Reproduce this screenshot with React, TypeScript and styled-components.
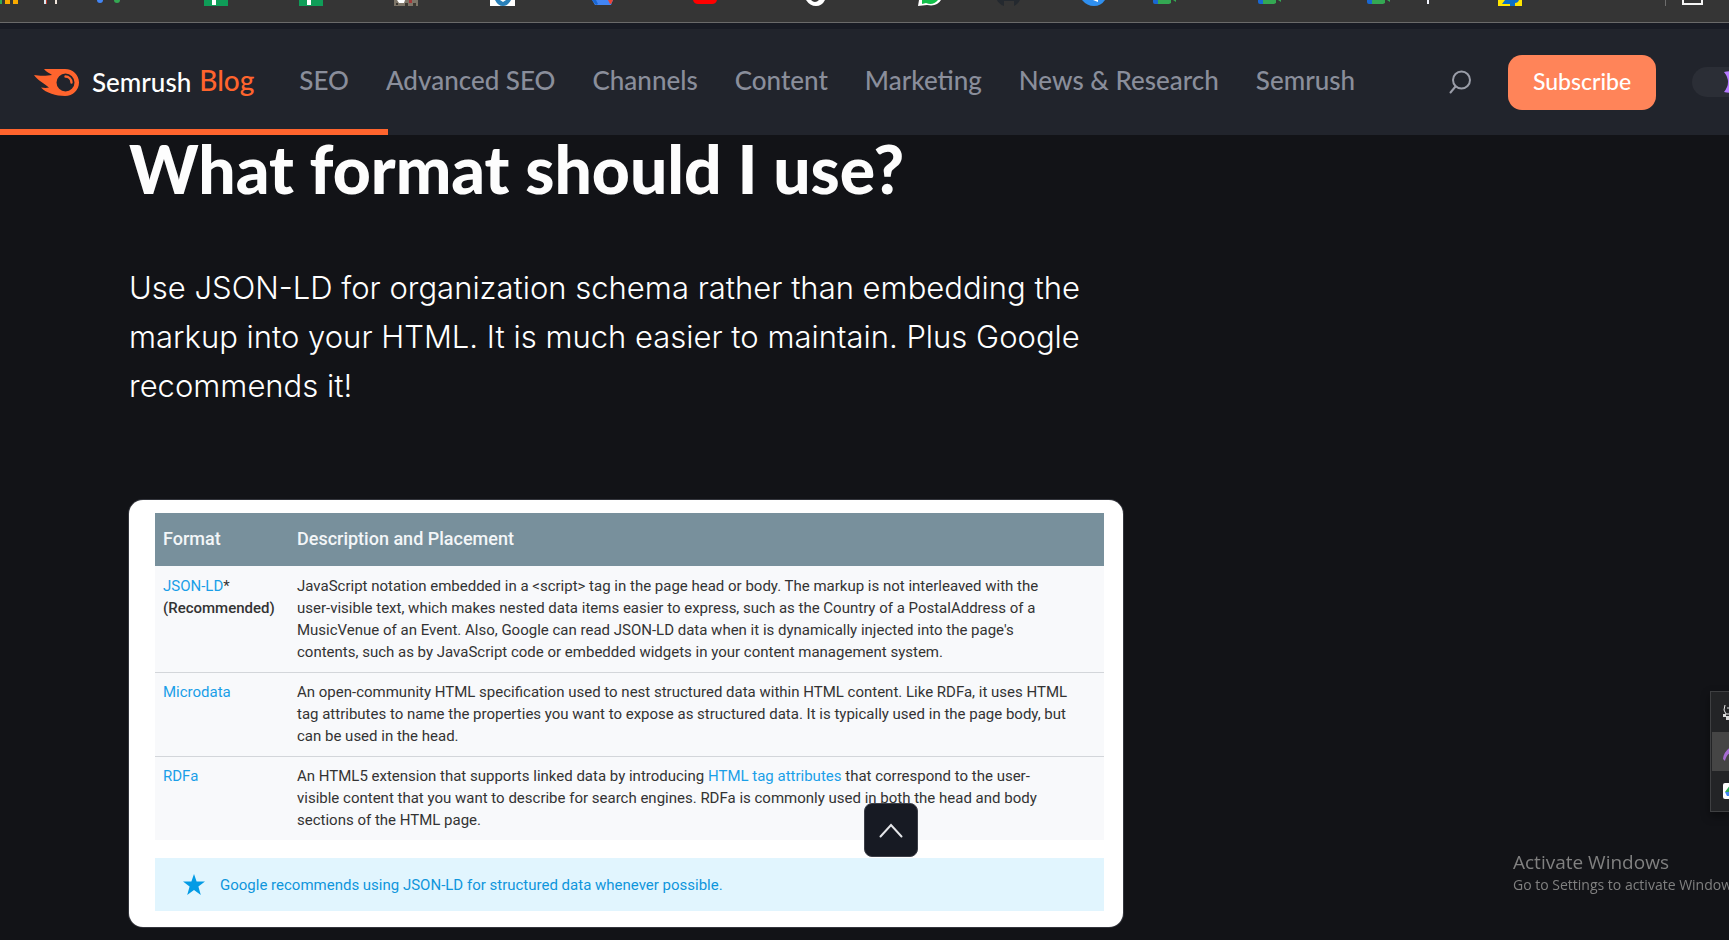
import React from 'react';
import styled, { createGlobalStyle } from 'styled-components';

const GlobalStyle = createGlobalStyle`
  *, *::before, *::after { box-sizing: border-box; }
  html, body { margin: 0; background: #121317; }
  body { height: 100vh; overflow: hidden; font-family: Inter, "Liberation Sans", sans-serif; color: #fff; }
  button { font: inherit; border: 0; padding: 0; cursor: pointer; }
`;

const Page = styled.div`
  min-height: 100vh;
  background: #121317;
`;

/* ---------- browser bookmarks strip ---------- */

const Bookmarks = styled.div`
  height: 23px;
  background: #353535;
  border-bottom: 1px solid #6a6a6a;
  svg { display: block; }
`;

function BookmarkIcons() {
  return (
    <svg width="1729" height="22" viewBox="0 0 1729 22" aria-hidden="true">
      <path d="M0 0h2v4H0z" fill="#34a853" />
      <path d="M5 0h5v4H5zM13 0h5v4h-5z" fill="#f9ab00" />
      <path d="M44 0h3v4h-3z" fill="#d9e8f0" />
      <path d="M46 0h1v4h-1z" fill="#c0392b" />
      <path d="M55 0h2v4h-2z" fill="#f1e6dc" />
      <path d="M97 0h6q0 3-3 3t-3-3" fill="#4285f4" />
      <path d="M114 0h6q0 3-3 3t-3-3" fill="#34a853" />
      <path d="M204 0h24v6h-24z" fill="#0f9d58" />
      <path d="M212 0h4v5h-4z" fill="#fff" />
      <path d="M299 0h24v6h-24z" fill="#0f9d58" />
      <path d="M307 0h4v5h-4z" fill="#fff" />
      <path d="M394 0h24v6h-24z" fill="#7d7568" />
      <path d="M397 0h8l-1 3h-5z" fill="#fff" />
      <path d="M409 0h3v3h-3z" fill="#a23a3a" />
      <path d="M405 3h3v3h-3zM413 3h3v3h-3zM396 3h2v2h-2z" fill="#3c3832" />
      <path d="M490 0h25v6h-25z" fill="#fff" />
      <path d="M495 0q3 6 8 6t8-6h-5l-3 2-3-2z" fill="#2980b9" />
      <path d="M592 0h21l-2 5h-16z" fill="#4285f4" />
      <path d="M592 0h4l2 4-2 1z" fill="#1967d2" />
      <path d="M608 0h5l-2 4h-1z" fill="#ea4335" />
      <path d="M693 0h24q-1 4-5 4h-14q-4 0-5-4" fill="#f00" />
      <path d="M806 0h5q4 4 8 0l2 0h4q-3 6-9 6t-10-6" fill="#fff" />
      <path d="M919 0h22q-4 7-14 5l-9 1z" fill="#fff" />
      <path d="M922 0h16q-5 6-12 3l-4 1z" fill="#12c04a" />
      <path d="M997 0h23q-2 4-6 6v-5h-10v5q-5-2-7-6" fill="#24292f" />
      <path d="M1082 0h23q-4 6-11 6t-12-6" fill="#2f8fef" />
      <path d="M1093 0h5v2z" fill="#fff" />
      {[1153, 1258, 1367].map((x) => (
        <g key={x}>
          <path d={`M${x} 0h5v4h-3q-2 0-2-2z`} fill="#1967d2" />
          <path d={`M${x + 5} 0h13v3l-2 1h-11zM${x + 20} 0h3v2z`} fill="#34a853" />
        </g>
      ))}
      <path d="M1427 0h2v4h-2z" fill="#f4f6ff" />
      <path d="M1498 0h24v6h-24z" fill="#ffe600" />
      <path d="M1505 0h14q-1 3-4 3v3h-5v-2h-8z" fill="#0b6fc7" />
      <path d="M1665 0h1v6h-1z" fill="#6d6d6d" />
      <path d="M1683 0v4h19V0" fill="none" stroke="#f5f5f5" strokeWidth="2" />
    </svg>
  );
}

/* ---------- site header ---------- */

const Header = styled.header`
  position: relative;
  display: flex;
  align-items: center;
  height: 112px;
  padding: 0 0 0 34px;
  overflow: hidden;
  background: #21242c;
  border-top: 6px solid #181b24;
  font-family: Lato, "Open Sans", sans-serif;
  white-space: nowrap;
`;

const Brand = styled.a`
  display: flex;
  align-items: center;
  flex: none;
  color: #fff;
  font-size: 26px;
  font-weight: 500;
  text-decoration: none;
  svg { margin-right: 13px; }
`;

const BrandSection = styled.span`
  margin-left: 8px;
  padding-bottom: 4px;
  color: #ff642d;
  font-size: 28px;
`;

const Nav = styled.nav`
  display: flex;
  flex: none;
  gap: 37px;
  margin-left: 45px;
  padding-bottom: 4px;
`;

const NavLink = styled.a`
  color: #8a8e9b;
  font-size: 26px;
  font-weight: 500;
  text-decoration: none;
`;

const Actions = styled.div`
  display: flex;
  align-items: center;
  flex: none;
  margin-left: auto;
`;

const IconButton = styled.button`
  display: flex;
  margin-right: 37px;
  background: none;
`;

const Subscribe = styled.button`
  width: 148px;
  height: 55px;
  margin-right: 36px;
  padding-bottom: 2px;
  border-radius: 14px;
  background: #ff8459;
  color: #fff;
  font-size: 23px;
  font-weight: 500;
`;

const ThemeToggle = styled.button`
  display: flex;
  align-items: center;
  width: 37px;
  height: 30px;
  padding-left: 32px;
  overflow: hidden;
  border-radius: 15px 0 0 15px;
  background: #2b2e36;
  svg { flex: none; }
`;

const Progress = styled.div`
  position: absolute;
  left: 0;
  bottom: 0;
  width: 22.44%;
  height: 6px;
  background: #ff642d;
`;

/* ---------- article ---------- */

const Article = styled.main`
  max-width: 1123px;
  padding-left: 129px;
`;

const Heading = styled.h2`
  margin: 0;
  color: #fdfdfd;
  font-family: Lato, "Open Sans", sans-serif;
  font-size: 66px;
  font-weight: 900;
  line-height: 68px;
  white-space: nowrap;
`;

const Lead = styled.p`
  margin: 60px 0 0;
  font-size: 31px;
  font-weight: 300;
  line-height: 49px;
  white-space: nowrap;
`;

const Card = styled.section`
  margin-top: 90px;
  padding: 13px 19px 16px 26px;
  border-radius: 14px;
  box-shadow: 0 0 0 1px #33353c;
  background: #fff;
  color: #333;
  font-family: Roboto, "Liberation Sans", sans-serif;
  font-size: 15px;
  line-height: 22px;
`;

const FormatTable = styled.table`
  width: 100%;
  border-collapse: collapse;
  table-layout: fixed;
  text-align: left;
  background: #f8f9fb;

  th, td { padding: 9px 8px; vertical-align: top; white-space: nowrap; }
  thead th {
    padding: 15px 8px 16px;
    background: #78909c;
    color: #f3f6f8;
    font-size: 18px;
    font-weight: 500;
  }
  tbody th { font-weight: 400; }
  tbody tr + tr { border-top: 1px solid #d3d6da; }
  tbody tr + tr > * { padding-top: 8px; }
`;

const FormatColumn = styled.col`
  width: 134px;
`;

const TextLink = styled.a`
  color: #1a9fe8;
  text-decoration: none;
`;

const Recommended = styled.strong`
  font-weight: 500;
`;

const Tip = styled.div`
  display: flex;
  align-items: center;
  gap: 15px;
  height: 53px;
  margin-top: 18px;
  padding-left: 28px;
  background: #e1f5fe;
  color: #0f96dc;
`;

/* ---------- overlays ---------- */

const ScrollTop = styled.button`
  position: fixed;
  left: calc(50% - 1px);
  bottom: 83px;
  display: flex;
  align-items: center;
  justify-content: center;
  width: 54px;
  height: 54px;
  border: 1px solid #3c3f48;
  border-radius: 8px;
  background: #171a23;
`;

const Dock = styled.aside`
  position: fixed;
  right: 0;
  bottom: 128px;
  width: 19px;
  padding: 1px 0 1px 1px;
  border: 1px solid #3f4042;
  border-right: 0;
  background: #232426;
  box-shadow: 0 4px 10px rgba(0, 0, 0, 0.4);
`;

const DockItem = styled.button<{ $active?: boolean }>`
  display: flex;
  align-items: center;
  width: 17px;
  height: 39px;
  padding-left: 11px;
  overflow: hidden;
  background: ${(p) => (p.$active ? '#454545' : 'transparent')};
  svg { flex: none; }
`;

const Watermark = styled.div`
  position: fixed;
  left: calc(100% - 216px);
  bottom: 45px;
  color: #808080;
  font-family: "Open Sans", "Noto Sans", sans-serif;
  font-size: 14px;
  line-height: 20px;
  white-space: nowrap;
  pointer-events: none;
`;

const WatermarkTitle = styled.div`
  font-size: 19px;
  line-height: 26px;
`;

const navItems = ['SEO', 'Advanced SEO', 'Channels', 'Content', 'Marketing', 'News & Research', 'Semrush'];

export default function App() {
  return (
    <Page>
      <GlobalStyle />
      <Bookmarks><BookmarkIcons /></Bookmarks>
      <Header>
        <Brand href="#">
          <svg width="45" height="27" viewBox="0 0 45 27" aria-hidden="true">
            <path
              fill="#ff642d"
              fillRule="evenodd"
              d="M10 0H31C39 0 45 6 45 13.500S39 27 31 27C22 27 12 24 7 18.500C10 19 13 19 15 18.500C11 15 3 11 0 6C5 7 13 7 18 6C16 4 12 3 10 0ZM31.500 4.500A9 9 0 1 0 31.500 22.500A9 9 0 1 0 31.500 4.500Z"
            />
            <path d="M31.500 7.500A6 6 0 0 1 37.500 13.500" fill="none" stroke="#ff642d" strokeWidth="2.400" strokeLinecap="round" />
          </svg>
          Semrush <BrandSection>Blog</BrandSection>
        </Brand>
        <Nav>
          {navItems.map((item) => <NavLink key={item} href="#">{item}</NavLink>)}
        </Nav>
        <Actions>
          <IconButton aria-label="Search">
            <svg width="22" height="24" viewBox="0 0 22 24" fill="none" stroke="#9a9da8" strokeWidth="2" strokeLinecap="round">
              <circle cx="12.500" cy="10" r="8.500" />
              <path d="M6.500 16.500L1.500 22.500" />
            </svg>
          </IconButton>
          <Subscribe>Subscribe</Subscribe>
          <ThemeToggle aria-label="Dark theme">
            <svg width="22" height="22" viewBox="0 0 22 22">
              <path d="M0 1Q4 0 8 0Q22 2 22 11T8 22Q4 22 0 21Q4 16 4 11T0 1Z" fill="#b57bff" />
            </svg>
          </ThemeToggle>
        </Actions>
        <Progress />
      </Header>

      <Article>
        <Heading>What format should I use?</Heading>
        <Lead>
          Use JSON-LD for organization schema rather than embedding the<br />
          markup into your HTML. It is much easier to maintain. Plus Google<br />
          recommends it!
        </Lead>
        <Card>
          <FormatTable>
            <colgroup><FormatColumn /><col /></colgroup>
            <thead>
              <tr><th scope="col">Format</th><th scope="col">Description and Placement</th></tr>
            </thead>
            <tbody>
              <tr>
                <th scope="row"><TextLink href="#">JSON-LD</TextLink>*<br /><Recommended>(Recommended)</Recommended></th>
                <td>
                  JavaScript notation embedded in a &lt;script&gt; tag in the page head or body. The markup is not interleaved with the<br />
                  user-visible text, which makes nested data items easier to express, such as the Country of a PostalAddress of a<br />
                  MusicVenue of an Event. Also, Google can read JSON-LD data when it is dynamically injected into the page's<br />
                  contents, such as by JavaScript code or embedded widgets in your content management system.
                </td>
              </tr>
              <tr>
                <th scope="row"><TextLink href="#">Microdata</TextLink></th>
                <td>
                  An open-community HTML specification used to nest structured data within HTML content. Like RDFa, it uses HTML<br />
                  tag attributes to name the properties you want to expose as structured data. It is typically used in the page body, but<br />
                  can be used in the head.
                </td>
              </tr>
              <tr>
                <th scope="row"><TextLink href="#">RDFa</TextLink></th>
                <td>
                  An HTML5 extension that supports linked data by introducing <TextLink href="#">HTML tag attributes</TextLink> that correspond to the user-<br />
                  visible content that you want to describe for search engines. RDFa is commonly used in both the head and body<br />
                  sections of the HTML page.
                </td>
              </tr>
            </tbody>
          </FormatTable>
          <Tip>
            <svg width="22" height="21" viewBox="0 0 22 21" aria-hidden="true">
              <path d="M11 0L13.600 7.600H22L15.400 12.500L17.800 21L11 16L4.200 21L6.600 12.500L0 7.600H8.400Z" fill="#039be5" />
            </svg>
            Google recommends using JSON-LD for structured data whenever possible.
          </Tip>
        </Card>
      </Article>

      <ScrollTop aria-label="Back to top">
        <svg width="24" height="15" viewBox="0 0 24 15" fill="none" stroke="#e4e5e8" strokeWidth="2" strokeLinecap="round">
          <path d="M1.500 13.500L12 2L22.500 13.500" />
        </svg>
      </ScrollTop>

      <Dock aria-label="Quick apps">
        <DockItem aria-label="Snipping">
          <svg width="16" height="16" viewBox="0 0 16 16">
            <path d="M2 0L1 5L3 9H6M4 3h4" fill="none" stroke="#e8e8e8" strokeWidth="1" />
            <path d="M0 9h3v3H0zM3 11h3v4H3z" fill="#d8d8d8" />
          </svg>
        </DockItem>
        <DockItem $active aria-label="Notes">
          <svg width="18" height="18" viewBox="0 0 18 18"><path d="M0 16Q1 7 10 3V10Q4 9 2 18Z" fill="#a56bd0" /></svg>
        </DockItem>
        <DockItem aria-label="Drive">
          <svg width="16" height="16" viewBox="0 0 16 16">
            <rect width="20" height="16" rx="2" fill="#fff" />
            <path d="M2 9L7 2V9Z" fill="#34a853" />
            <path d="M2 9H8V13H4Z" fill="#4285f4" />
          </svg>
        </DockItem>
      </Dock>

      <Watermark>
        <WatermarkTitle>Activate Windows</WatermarkTitle>
        Go to Settings to activate Windows.
      </Watermark>
    </Page>
  );
}
